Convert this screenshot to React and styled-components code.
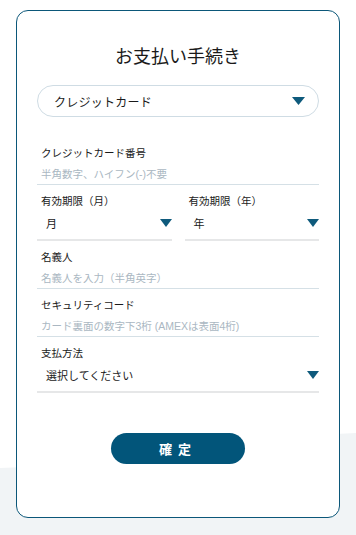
import styled, { createGlobalStyle } from "styled-components";

const GlobalStyle = createGlobalStyle`
  html, body {
    margin: 0;
    padding: 0;
    background: #ffffff;
  }
  body {
    font-family: "Liberation Sans", "Noto Sans CJK JP", sans-serif;
    color: #1e1e1e;
  }
  * {
    box-sizing: border-box;
  }
`;

const Page = styled.div`
  position: relative;
  width: 356px;
  min-height: 535px;
  padding: 10px 16px 0 16px;
  overflow: hidden;
`;

const Backdrop = styled.svg`
  position: absolute;
  left: 0;
  bottom: 0;
  width: 356px;
  height: 110px;
  z-index: 0;
`;

const Card = styled.div`
  position: relative;
  z-index: 1;
  width: 324px;
  height: 508px;
  padding: 34px 20px 0 20px;
  background: #ffffff;
  border: 1px solid #0b5779;
  border-radius: 12px;
  display: flex;
  flex-direction: column;
`;

const Title = styled.h1`
  margin: 0;
  font-size: 18px;
  line-height: 24px;
  font-weight: 400;
  text-align: center;
  color: #1a1a1a;
`;

const Pill = styled.div`
  margin-top: 16px;
  height: 32px;
  border: 1px solid #cfdce4;
  border-radius: 16px;
  padding: 0 13px 0 16px;
  display: flex;
  align-items: center;
  justify-content: space-between;
  font-size: 12px;
  letter-spacing: 0.02em;
  color: #1a1a1a;
`;

const Form = styled.div`
  margin-top: 28px;
  display: flex;
  flex-direction: column;
  gap: 8px;
`;

const Row = styled.div`
  display: grid;
  grid-template-columns: 1fr 1fr;
  gap: 13px;
`;

const Field = styled.div`
  display: flex;
  flex-direction: column;
`;

const Label = styled.div`
  padding-left: 4px;
  font-size: 10.5px;
  line-height: 16px;
  color: #1a1a1a;
`;

const Input = styled.div`
  margin-top: 1px;
  height: 23px;
  padding-left: 4px;
  display: flex;
  align-items: center;
  font-size: 10.5px;
  color: #aab7c2;
  border-bottom: 1px solid #d5e0e6;
`;

const Select = styled.div`
  height: 32px;
  padding: 0 0 2px 9px;
  display: flex;
  align-items: center;
  justify-content: space-between;
  font-size: 11px;
  color: #1a1a1a;
  border-bottom: 2px solid #e6e7e8;
`;

const Arrow = styled.svg`
  flex: none;
  width: ${(p) => p.$w}px;
  height: 8px;
`;

const ButtonWrap = styled.div`
  margin-top: 40px;
  display: flex;
  justify-content: center;
`;

const Confirm = styled.button`
  width: 134px;
  height: 31px;
  border: none;
  border-radius: 16px;
  background: #02557a;
  color: #ffffff;
  font-family: "Liberation Sans", "Noto Sans CJK JP", sans-serif;
  font-size: 13px;
  font-weight: 700;
  letter-spacing: 6px;
  padding-left: 6px;
  cursor: pointer;
`;

function Caret({ w = 12 }) {
  return (
    <Arrow $w={w} viewBox="0 0 12 8" preserveAspectRatio="none">
      <polygon points="0,0 12,0 6,8" fill="#0e5a7c" />
    </Arrow>
  );
}

export default function App() {
  return (
    <>
      <GlobalStyle />
      <Page>
        <Backdrop viewBox="0 0 356 110" preserveAspectRatio="none">
          <path d="M0 43 C 120 40, 240 12, 356 8 L356 110 L0 110 Z" fill="#f1f4f6" />
        </Backdrop>
        <Card>
          <Title>お支払い手続き</Title>
          <Pill>
            <span>クレジットカード</span>
            <Caret w={13} />
          </Pill>

          <Form>
            <Field>
              <Label>クレジットカード番号</Label>
              <Input>半角数字、ハイフン(-)不要</Input>
            </Field>

            <Row>
              <Field>
                <Label>有効期限（月）</Label>
                <Select>
                  <span>月</span>
                  <Caret />
                </Select>
              </Field>
              <Field>
                <Label>有効期限（年）</Label>
                <Select>
                  <span>年</span>
                  <Caret />
                </Select>
              </Field>
            </Row>

            <Field>
              <Label>名義人</Label>
              <Input>名義人を入力（半角英字）</Input>
            </Field>

            <Field>
              <Label>セキュリティコード</Label>
              <Input>カード裏面の数字下3桁 (AMEXは表面4桁)</Input>
            </Field>

            <Field>
              <Label>支払方法</Label>
              <Select>
                <span>選択してください</span>
                <Caret />
              </Select>
            </Field>
          </Form>

          <ButtonWrap>
            <Confirm type="button">確定</Confirm>
          </ButtonWrap>
        </Card>
      </Page>
    </>
  );
}
